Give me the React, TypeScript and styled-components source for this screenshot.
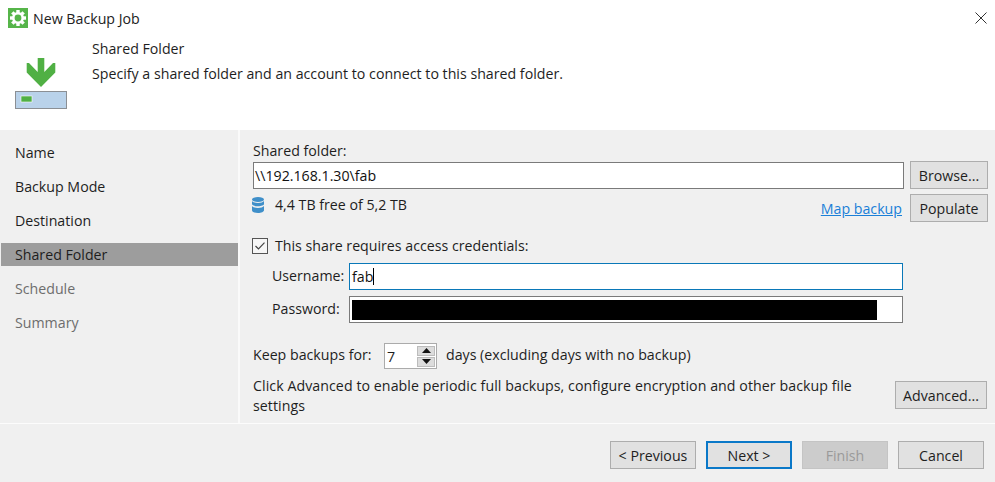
import React from "react";
import styled, { createGlobalStyle } from "styled-components";

const Global = createGlobalStyle`
  html, body { margin: 0; padding: 0; background: #fff; }
  body { font-family: "Open Sans", "Noto Sans", "Liberation Sans", sans-serif; font-size: 14.2px; color: #1e1e1e; }
  * { box-sizing: border-box; }
`;

const Window = styled.div`
  width: 995px;
  height: 482px;
  display: flex;
  flex-direction: column;
  overflow: hidden;
  background: #fff;
`;
const TitleBar = styled.div`
  height: 38px;
  display: flex;
  align-items: center;
  padding: 0 8px 2px 8px;
  gap: 5px;
`;
const Title = styled.div`
  flex: 1;
  color: #222;
`;
const Header = styled.div`
  height: 92px;
  display: flex;
`;
const HeaderIcon = styled.div`
  width: 92px;
  padding: 20px 0 0 15px;
`;
const HeaderText = styled.div`
  display: flex;
  flex-direction: column;
  gap: 6px;
  padding-top: 1px;
  line-height: 19px;
`;
const Body = styled.div`
  height: 293px;
  display: flex;
  background: #f0f0f0;
`;
const Sidebar = styled.nav`
  width: 237px;
  margin-left: 1px;
  padding-top: 5px;
  display: flex;
  flex-direction: column;
  flex: none;
`;
const NavItem = styled.div<{ $active?: boolean; $disabled?: boolean }>`
  height: 34px;
  display: flex;
  align-items: center;
  padding-left: 14px;
  color: ${(p) => (p.$disabled ? "#6d6d6d" : "#1e1e1e")};
  position: relative;
  z-index: 0;
  &::before {
    content: "";
    display: ${(p) => (p.$active ? "block" : "none")};
    position: absolute;
    z-index: -1;
    left: 0;
    right: 0;
    top: 6px;
    bottom: 5px;
    background: #9d9d9d;
  }
`;
const Main = styled.main`
  flex: 1;
  border-left: 2px solid #fafafa;
  padding: 11px 7px 0 13px;
  display: flex;
  flex-direction: column;
`;
const FieldLabel = styled.div`
  height: 21px;
  line-height: 20px;
`;
const Row = styled.div`
  display: flex;
  align-items: center;
`;
const Input = styled.div<{ $focus?: boolean }>`
  height: 27px;
  flex: 1;
  border: 1px solid ${(p) => (p.$focus ? "#0a78b8" : "#7a7a7a")};
  background: #fff;
  display: flex;
  align-items: center;
  padding-left: 2px;
  color: #111;
`;
const FolderInput = styled(Input)`
  padding-left: 1px;
`;
const Caret = styled.span`
  width: 1px;
  height: 17px;
  background: #000;
`;
const Redacted = styled.div`
  width: 525px;
  height: 20px;
  background: #000;
`;
const Button = styled.div<{ $primary?: boolean; $disabled?: boolean; $w?: number }>`
  width: ${(p) => p.$w ?? 78}px;
  height: 28px;
  flex: none;
  display: flex;
  align-items: center;
  justify-content: center;
  background: ${(p) => (p.$disabled ? "#cccccc" : "#e1e1e1")};
  border: ${(p) => (p.$primary ? "2px solid #0a78c8" : p.$disabled ? "1px solid #c4c4c4" : "1px solid #adadad")};
  color: ${(p) => (p.$disabled ? "#9a9a9a" : "#1e1e1e")};
`;
const FolderRow = styled(Row)`
  height: 28px;
  margin-top: -1px;
  gap: 6px;
`;
const InfoRow = styled(Row)`
  height: 28px;
  margin-top: 5px;
`;
const FreeSpace = styled.div`
  flex: 1;
  display: flex;
  align-items: center;
  gap: 11px;
  margin: -7px 0 0 -1px;
`;
const MapLink = styled.a`
  color: #1a7fd8;
  text-decoration: underline;
  margin-right: 8px;
  padding-top: 1px;
`;
const CheckRow = styled(Row)`
  margin: 16px 0 0 -1px;
  height: 16px;
  gap: 7px;
`;
const CheckLabel = styled.span`
  padding-bottom: 2px;
`;
const CheckBox = styled.span`
  width: 16px;
  height: 16px;
  border: 1px solid #555;
  background: #f6f6f6;
  display: flex;
  align-items: center;
  justify-content: center;
`;
const Credentials = styled.div`
  margin: 9px 85px 0 19px;
  display: grid;
  grid-template-columns: 77px 1fr;
  row-gap: 6px;
  align-items: center;
`;
const CredLabel = styled.span`
  padding-bottom: 2px;
`;
const KeepRow = styled(Row)`
  margin-top: 20px;
  height: 26px;
`;
const KeepLabel = styled.span`
  width: 131px;
  padding-bottom: 3px;
`;
const KeepSuffix = styled.span`
  padding-bottom: 3px;
`;
const Spinner = styled.div`
  width: 53px;
  height: 26px;
  border: 1px solid #ababab;
  background: #fff;
  display: flex;
  align-items: center;
  justify-content: space-between;
  padding: 1px 1px 1px 2px;
  margin-right: 9px;
`;
const SpinButtons = styled.div`
  width: 18px;
  height: 21px;
  display: flex;
  flex-direction: column;
  gap: 1px;
`;
const SpinButton = styled.div`
  flex: 1;
  background: #dcdcdc;
  border: 1px solid #bcbcbc;
  display: flex;
  align-items: center;
  justify-content: center;
`;
const AdvancedRow = styled(Row)`
  margin-top: 7px;
  align-items: flex-start;
  justify-content: space-between;
  padding-right: 1px;
`;
const AdvancedText = styled.div`
  width: 625px;
  line-height: 20px;
  letter-spacing: 0.06px;
`;
const AdvancedButton = styled(Button)`
  margin-top: 5px;
`;
const Footer = styled.footer`
  flex: 1;
  border-top: 1px solid #fcfcfc;
  background: #f0f0f0;
  display: flex;
  justify-content: flex-end;
  gap: 10px;
  padding: 17px 11px 0 0;
`;

const Gear = () => (
  <svg width="20" height="20" viewBox="0 0 20 20">
    <rect width="20" height="20" fill="#56b54a" />
    <g fill="#fff">
      {[0, 45, 90, 135, 180, 225, 270, 315].map((a) => (
        <rect key={a} x="8.300" y="2" width="3.400" height="4" transform={`rotate(${a} 10 10)`} />
      ))}
    </g>
    <circle cx="10" cy="10" r="4.700" fill="#56b54a" stroke="#fff" strokeWidth="2.600" />
  </svg>
);
const BackupIcon = () => (
  <svg width="52" height="52" viewBox="0 0 52 52">
    <path d="M22.700 0h6.600v14L38 5h2.300v9.500L26 29 11.700 14.500V5H14l8.700 9z" fill="#50b044" />
    <rect x=".5" y="33.500" width="51" height="17" fill="#b9d2ea" stroke="#8b8f94" />
    <rect x="6" y="38" width="11" height="6" fill="#50b044" stroke="#fff" strokeWidth=".6" />
  </svg>
);
const DbIcon = () => (
  <svg width="12" height="16" viewBox="0 0 12 16" fill="#3f8fc9">
    <ellipse cx="6" cy="2.500" rx="6" ry="2.500" />
    <path d="M0 4c1 1.300 3.200 2 6 2s5-.7 6-2v3c0 1.300-2.700 2.200-6 2.200S0 8.300 0 7z" />
    <path d="M0 9c1 1.300 3.200 2 6 2s5-.7 6-2v4.200C12 14.800 9.300 16 6 16s-6-1.200-6-2.800z" />
  </svg>
);
const Close = () => (
  <svg width="12" height="12" viewBox="0 0 12 12" stroke="#333" strokeWidth="1">
    <path d="M.5.500l11 11M11.500.500l-11 11" />
  </svg>
);
const Check = () => (
  <svg width="10" height="8" viewBox="0 0 10 8" fill="none" stroke="#444" strokeWidth="1.200">
    <path d="M.5 4l3 3L9.500.7" />
  </svg>
);
const Tri = ({ down }: { down?: boolean }) => (
  <svg width="9" height="5" viewBox="0 0 9 5" fill="#111">
    <path d={down ? "M0 0h9L4.500 5z" : "M4.500 0L9 5H0z"} />
  </svg>
);

export default function App() {
  return (
    <Window>
      <Global />
      <TitleBar>
        <Gear />
        <Title>New Backup Job</Title>
        <Close />
      </TitleBar>
      <Header>
        <HeaderIcon>
          <BackupIcon />
        </HeaderIcon>
        <HeaderText>
          <div>Shared Folder</div>
          <div>Specify a shared folder and an account to connect to this shared folder.</div>
        </HeaderText>
      </Header>
      <Body>
        <Sidebar>
          <NavItem>Name</NavItem>
          <NavItem>Backup Mode</NavItem>
          <NavItem>Destination</NavItem>
          <NavItem $active>Shared Folder</NavItem>
          <NavItem $disabled>Schedule</NavItem>
          <NavItem $disabled>Summary</NavItem>
        </Sidebar>
        <Main>
          <FieldLabel>Shared folder:</FieldLabel>
          <FolderRow>
            <FolderInput>\\192.168.1.30\fab</FolderInput>
            <Button>Browse...</Button>
          </FolderRow>
          <InfoRow>
            <FreeSpace>
              <DbIcon />
              <span>4,4 TB free of 5,2 TB</span>
            </FreeSpace>
            <MapLink>Map backup</MapLink>
            <Button>Populate</Button>
          </InfoRow>
          <CheckRow>
            <CheckBox>
              <Check />
            </CheckBox>
            <CheckLabel>This share requires access credentials:</CheckLabel>
          </CheckRow>
          <Credentials>
            <CredLabel>Username:</CredLabel>
            <Input $focus>
              fab
              <Caret />
            </Input>
            <CredLabel>Password:</CredLabel>
            <Input>
              <Redacted />
            </Input>
          </Credentials>
          <KeepRow>
            <KeepLabel>Keep backups for:</KeepLabel>
            <Spinner>
              <span>7</span>
              <SpinButtons>
                <SpinButton>
                  <Tri />
                </SpinButton>
                <SpinButton>
                  <Tri down />
                </SpinButton>
              </SpinButtons>
            </Spinner>
            <KeepSuffix>days (excluding days with no backup)</KeepSuffix>
          </KeepRow>
          <AdvancedRow>
            <AdvancedText>
              Click Advanced to enable periodic full backups, configure encryption and other backup file settings
            </AdvancedText>
            <AdvancedButton $w={92}>Advanced...</AdvancedButton>
          </AdvancedRow>
        </Main>
      </Body>
      <Footer>
        <Button $w={86}>&lt; Previous</Button>
        <Button $w={86} $primary>
          Next &gt;
        </Button>
        <Button $w={86} $disabled>
          Finish
        </Button>
        <Button $w={86}>Cancel</Button>
      </Footer>
    </Window>
  );
}
